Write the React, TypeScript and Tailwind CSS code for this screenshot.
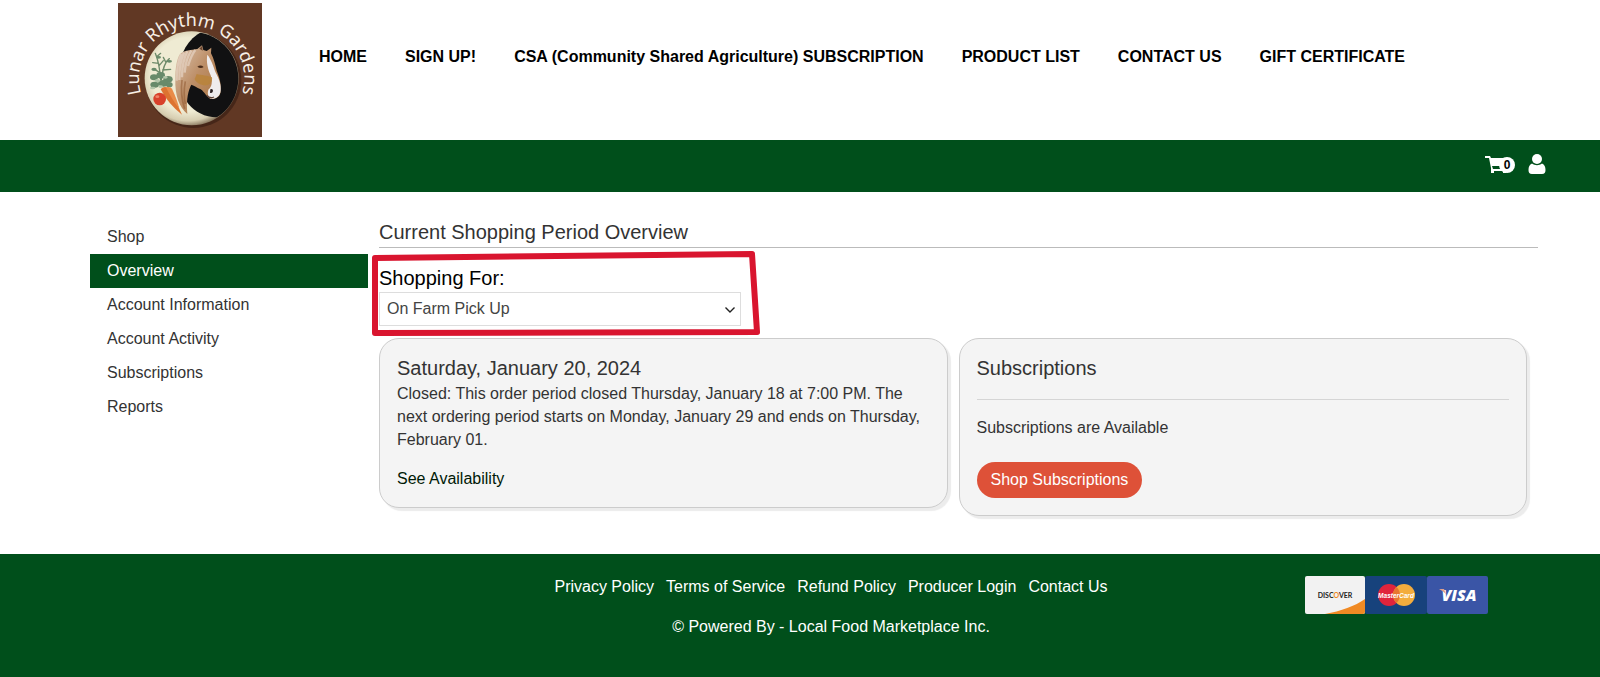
interface LinkItem {
  label: string;
  href: string;
}

const navLinks: LinkItem[] = [
  { label: "HOME", href: "#home" },
  { label: "SIGN UP!", href: "#sign-up" },
  { label: "CSA (Community Shared Agriculture) SUBSCRIPTION", href: "#csa" },
  { label: "PRODUCT LIST", href: "#products" },
  { label: "CONTACT US", href: "#contact" },
  { label: "GIFT CERTIFICATE", href: "#gift" },
];

const accountLinks: LinkItem[] = [
  { label: "Shop", href: "#shop" },
  { label: "Overview", href: "#overview" },
  { label: "Account Information", href: "#account" },
  { label: "Account Activity", href: "#activity" },
  { label: "Subscriptions", href: "#subscriptions" },
  { label: "Reports", href: "#reports" },
];

const footerLinks: LinkItem[] = [
  { label: "Privacy Policy", href: "#privacy" },
  { label: "Terms of Service", href: "#terms" },
  { label: "Refund Policy", href: "#refunds" },
  { label: "Producer Login", href: "#producer" },
  { label: "Contact Us", href: "#contact" },
];

function Logo() {
  return (
    <svg
      viewBox="54 9 432 402"
      className="h-[134px] w-36"
      role="img"
      aria-label="Lunar Rhythm Gardens"
    >
      <defs>
        <radialGradient id="moon" cx="0.46" cy="0.46" r="0.56">
          <stop offset="0.7" stopColor="#efebd3" />
          <stop offset="0.88" stopColor="#d6cdb0" />
          <stop offset="1" stopColor="#7d6a52" />
        </radialGradient>
        <linearGradient id="coat" x1="0" y1="0" x2="1" y2="1">
          <stop offset="0" stopColor="#dcc5b0" />
          <stop offset="0.45" stopColor="#bd8f68" />
          <stop offset="1" stopColor="#a8703a" />
        </linearGradient>
        <clipPath id="disc">
          <circle cx="275" cy="235" r="140" />
        </clipPath>
        <path id="arc" d="M 140 318 A 158 158 0 1 1 410 318" />
      </defs>
      <rect x="54" y="9" width="432" height="402" fill="#613824" />
      <circle cx="280" cy="240" r="144" fill="#3a1f14" opacity="0.7" />
      <circle cx="275" cy="235" r="141" fill="url(#moon)" />
      <g clipPath="url(#disc)">
        <path
          d="M308 94C262 118 240 160 236 215C232 285 275 350 350 352C400 330 425 280 420 220C414 160 370 105 308 94Z"
          fill="#111112"
        />
        {/* neck and head */}
        <path
          d="M240 162C252 150 274 150 292 147L306 136L310 150L320 153L334 143L333 160C342 176 346 196 350 212C358 232 364 250 362 272C362 288 350 298 332 297C320 292 314 276 302 268C290 262 280 256 274 254C266 270 258 292 262 342C238 322 224 286 226 236C226 206 230 176 240 162Z"
          fill="url(#coat)"
        />
        <path
          d="M322 164C334 178 340 200 348 220C358 238 364 256 362 272C360 290 346 298 332 296C322 288 322 276 326 268C336 260 338 244 332 226C324 208 318 186 322 164Z"
          fill="#efeced"
        />
        <path
          d="M290 222C304 226 324 226 336 232C338 246 330 254 320 256C304 258 288 248 284 238Z"
          fill="#b98338"
          opacity="0.8"
        />
        <path
          d="M244 162C234 182 230 212 230 242M252 158C242 178 238 208 238 240M262 154C250 178 246 202 246 232M274 152C260 172 256 192 254 218M286 150C276 162 270 178 264 198"
          stroke="#e8d7c9"
          strokeWidth="7"
          fill="none"
          opacity="0.65"
        />
        <path
          d="M246 240C242 270 244 296 254 326M256 244C252 266 250 286 256 312"
          stroke="#8b542b"
          strokeWidth="5"
          fill="none"
          opacity="0.5"
        />
        <path d="M292 200Q302 193 311 201Q302 208 292 200Z" fill="#4a2c1a" />
        <path d="M331 268Q339 265 339 273Q337 281 330 278Z" fill="#2b2021" />
        <path d="M320 286Q330 297 342 291" stroke="#5e4338" strokeWidth="4" fill="none" />
        <path d="M298 146L306 138L308 152Z" fill="#6b4630" />
      </g>
      {/* carrot tops */}
      <g fill="none" stroke="#6d8a69" strokeWidth="4" strokeLinecap="round">
        <path d="M182 240C180 210 178 190 166 160M184 240C188 206 196 184 208 176M180 218L160 206M188 210L212 208M176 190L158 188M178 196L190 182M170 170L182 160M198 188L190 172" />
      </g>
      <g fill="#688a6a">
        <ellipse cx="162" cy="232" rx="12" ry="9" />
        <ellipse cx="182" cy="226" rx="13" ry="10" />
        <ellipse cx="204" cy="238" rx="14" ry="10" />
        <ellipse cx="164" cy="254" rx="13" ry="9" />
        <ellipse cx="190" cy="250" rx="16" ry="10" />
        <ellipse cx="208" cy="254" rx="10" ry="8" />
        <ellipse cx="162" cy="208" rx="8" ry="5" />
        <ellipse cx="208" cy="184" rx="8" ry="4" />
        <ellipse cx="176" cy="172" rx="7" ry="4" />
      </g>
      <g fill="#b4c6aa">
        <ellipse cx="172" cy="242" rx="8" ry="5" />
        <ellipse cx="196" cy="232" rx="7" ry="4" />
        <ellipse cx="158" cy="264" rx="8" ry="4" />
        <ellipse cx="182" cy="260" rx="7" ry="4" />
      </g>
      <path d="M182 268Q192 256 204 264Q226 298 246 344Q206 314 182 268Z" fill="#dd7330" />
      <path d="M198 262Q210 258 216 266Q232 300 238 326Q216 300 198 262Z" fill="#e98b48" />
      <circle cx="179" cy="297" r="19" fill="#d8412b" />
      <ellipse cx="172" cy="290" rx="6" ry="4" fill="#ee8468" />
      <text
        fill="#f7efe6"
        fontSize="54"
        textAnchor="middle"
        className="font-['Noto_Sans',sans-serif]"
      >
        <textPath href="#arc" startOffset="50%">
          Lunar Rhythm Gardens
        </textPath>
      </text>
    </svg>
  );
}

function CartIcon() {
  return (
    <svg viewBox="0 0 29 20" className="h-5 w-[29px]" aria-hidden>
      <path
        d="M0 2H5L6 4H24L22 12H7L8 15H23V17H6V14L4 4H0Z"
        fill="#fff"
      />
      <path d="M6 16H9V19H6ZM18 16H21V19H18Z" fill="#fff" />
    </svg>
  );
}

function UserIcon() {
  return (
    <svg viewBox="0 0 18 20" className="h-5 w-[18px]" aria-hidden>
      <circle cx="9" cy="5" r="5" fill="#fff" />
      <path
        d="M4 9.500C1.500 10.500 0.500 13 0.500 16C0.500 18.500 1.500 20 4 20H14C16.500 20 17.500 18.500 17.500 16C17.500 13 16.500 10.500 14 9.500C11 11.800 7 11.800 4 9.500Z"
        fill="#fff"
      />
    </svg>
  );
}

function PaymentCards() {
  return (
    <div className="flex">
      <svg viewBox="0 0 60 38" className="h-[38px] w-[60px]" role="img" aria-label="Discover">
        <rect width="60" height="38" rx="2" fill="#f2f2f2" />
        <path d="M20 38C36 35 50 30 60 23V36Q60 38 58 38Z" fill="#f08a24" />
        <text
          x="30"
          y="22"
          fontSize="7"
          fontWeight="700"
          textAnchor="middle"
          fill="#222"
          className="font-[Lato,sans-serif]"
        >
          DISC<tspan fill="#f08a24">O</tspan>VER
        </text>
      </svg>
      <svg viewBox="0 0 62 38" className="h-[38px] w-[62px]" role="img" aria-label="MasterCard">
        <rect width="62" height="38" rx="2" fill="#17427c" />
        <circle cx="24" cy="19" r="11" fill="#e0243c" />
        <circle cx="39" cy="19" r="11" fill="#f3ad3d" />
        <path d="M31.500 11A11 11 0 0 1 31.500 27A11 11 0 0 1 31.500 11Z" fill="#e8752f" />
        <text
          x="31"
          y="22"
          fontSize="6.5"
          fontWeight="700"
          fontStyle="italic"
          textAnchor="middle"
          fill="#fff"
          className="font-['Liberation_Sans',sans-serif]"
        >
          MasterCard
        </text>
      </svg>
      <svg viewBox="0 0 61 38" className="h-[38px] w-[61px]" role="img" aria-label="Visa">
        <rect width="61" height="38" rx="2" fill="#3a55a6" />
        <text
          x="32"
          y="25"
          fontSize="16"
          fontWeight="800"
          fontStyle="italic"
          textAnchor="middle"
          fill="#fff"
          className="font-['Open_Sans',sans-serif]"
        >
          VISA
        </text>
        <path d="M12 13H17L19 18Q16 15 12 13Z" fill="#e0a08c" />
      </svg>
    </div>
  );
}

export default function App() {
  return (
    <div className="flex min-h-screen flex-col bg-white font-['Liberation_Sans',Arial,sans-serif] text-base text-[#333]">
      <header>
        <div className="flex pt-[3px] pb-[3px] pl-[118px]">
          <a href="#home" className="shrink-0">
            <Logo />
          </a>
          <nav className="flex gap-[38px] pt-[42px] pl-[57px] font-bold whitespace-nowrap text-black">
            {navLinks.map((link) => (
              <a key={link.label} href={link.href} className="h-6 hover:underline">
                {link.label}
              </a>
            ))}
          </nav>
        </div>
        <div className="flex h-[52px] items-start justify-end gap-[14px] bg-[#004f1b] pt-[14px] pr-[54px]">
          <button type="button" aria-label="Cart, 0 items" className="relative">
            <CartIcon />
            <span className="absolute top-[3px] -right-px h-4 w-4 rounded-full bg-white text-center text-xs leading-4 font-bold text-black">
              0
            </span>
          </button>
          <button type="button" aria-label="Account">
            <UserIcon />
          </button>
        </div>
      </header>

      <div className="flex flex-1 gap-[11px] pt-7 pr-[62px] pb-9 pl-[90px]">
        <nav className="w-[278px] shrink-0">
          <ul>
            {accountLinks.map((link) => (
              <li key={link.label}>
                <a
                  href={link.href}
                  className={`block px-[17px] leading-[34px] ${
                    link.label === "Overview" ? "bg-[#004f1b] text-white" : ""
                  }`}
                >
                  {link.label}
                </a>
              </li>
            ))}
          </ul>
        </nav>

        <main className="min-w-0 flex-1">
          <h1 className="border-b border-[#bbb] pb-0.5 text-xl leading-[25px]">
            Current Shopping Period Overview
          </h1>
          <div className="relative w-[362px] pt-4 pb-3">
            <label htmlFor="location" className="block text-xl leading-7 text-black">
              Shopping For:
            </label>
            <div className="relative">
              <select
                id="location"
                className="h-[34px] w-full appearance-none border border-[#ddd] bg-white px-[7px] text-[#444]"
              >
                <option>On Farm Pick Up</option>
              </select>
              <svg
                viewBox="0 0 10 6"
                className="pointer-events-none absolute top-[15px] right-[6px] h-[6px] w-[10px]"
                fill="none"
                stroke="#222"
                strokeWidth="1.4"
                aria-hidden
              >
                <path d="M0.500 0.500L5 5L9.500 0.500" />
              </svg>
            </div>
            {/* hand-drawn highlight around the picker */}
            <svg
              viewBox="0 0 390 86"
              className="pointer-events-none absolute top-[3px] -left-2 h-[86px] w-[390px] max-w-none"
              fill="none"
              stroke="#d9152f"
              strokeWidth="6"
              strokeLinejoin="round"
              aria-hidden
            >
              <path d="M4 7L381 3L386 81L4 82Z" />
            </svg>
          </div>

          <div className="flex items-start gap-[11px] pr-[11px]">
            <section className="flex-1 rounded-[20px] border border-[#ccc] bg-[#f4f4f4] px-[17px] pt-[15px] pb-4 shadow-[3px_3px_1px_#ececec]">
              <h2 className="text-xl leading-7">Saturday, January 20, 2024</h2>
              <p className="leading-[23px]">
                Closed: This order period closed Thursday, January 18 at 7:00 PM. The
                next ordering period starts on Monday, January 29 and ends on Thursday,
                February 01.
              </p>
              <a href="#availability" className="mt-4 inline-block leading-6 text-[#001a06]">
                See Availability
              </a>
            </section>
            <section className="flex-1 rounded-[20px] border border-[#ccc] bg-[#f4f4f4] px-[17px] pt-[15px] pb-[17px] shadow-[3px_3px_1px_#ececec]">
              <h2 className="border-b border-[#d5d5d5] pb-[17px] text-xl leading-7">
                Subscriptions
              </h2>
              <p className="pt-4 leading-6">Subscriptions are Available</p>
              <button
                type="button"
                className="mt-[22px] h-9 rounded-full bg-[#de5138] px-[14px] text-white"
              >
                Shop Subscriptions
              </button>
            </section>
          </div>
        </main>
      </div>

      <footer className="grid grid-cols-[1fr_auto_1fr] bg-[#004f1b] pt-[21px] pr-[112px] pb-[38px] pl-[174px] text-white">
        <div className="col-start-2">
          <div className="flex gap-3 leading-6">
            {footerLinks.map((link) => (
              <a key={link.label} href={link.href} className="hover:underline">
                {link.label}
              </a>
            ))}
          </div>
          <p className="pt-4 text-center leading-6">
            © Powered By - Local Food Marketplace Inc.
          </p>
        </div>
        <div className="flex items-start justify-end pt-px">
          <PaymentCards />
        </div>
      </footer>
    </div>
  );
}
